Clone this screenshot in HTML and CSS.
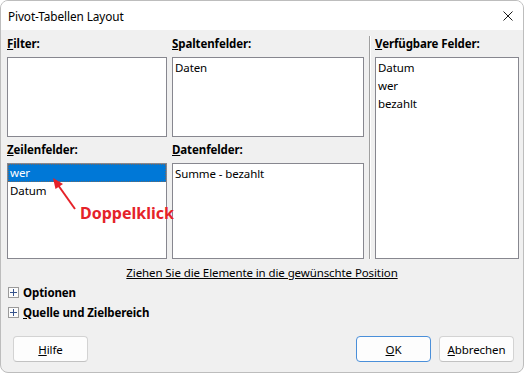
FILE: index.html
```html
<!DOCTYPE html>
<html lang="de">
<head>
<meta charset="utf-8">
<title>Pivot-Tabellen Layout</title>
<link rel="stylesheet" href="styles.css">
</head>
<body>
<div class="window">
  <div class="titlebar">
    <span class="title">Pivot-Tabellen Layout</span>
    <svg class="close" width="10" height="10" viewBox="0 0 10 10"><path d="M0.5 0.5 L9.5 9.5 M9.5 0.5 L0.5 9.5" stroke="#1a1a1a" stroke-width="1" fill="none"/></svg>
  </div>
  <div class="content">
    <div class="fields">
      <div class="field f-filter">
        <div class="label"><u>F</u>ilter:</div>
        <div class="list short"></div>
      </div>
      <div class="field f-spalten">
        <div class="label"><u>S</u>paltenfelder:</div>
        <div class="list short pad"><div class="item">Daten</div></div>
      </div>
      <div class="sep"></div>
      <div class="field f-avail">
        <div class="label"><u>V</u>erfügbare Felder:</div>
        <div class="list grow pad">
          <div class="item">Datum</div>
          <div class="item">wer</div>
          <div class="item">bezahlt</div>
        </div>
      </div>
      <div class="field f-zeilen">
        <div class="label"><u>Z</u>eilenfelder:</div>
        <div class="list tall">
          <div class="item selected">wer</div>
          <div class="item">Datum</div>
        </div>
      </div>
      <div class="field f-daten">
        <div class="label"><u>D</u>atenfelder:</div>
        <div class="list tall pad"><div class="item">Summe - bezahlt</div></div>
      </div>
    </div>
    <div class="hint"><span>Ziehen Sie die Elemente in die gewünschte Position</span></div>
    <div class="expander first"><span class="plus"></span><span class="exp-label">Optionen</span></div>
    <div class="expander"><span class="plus"></span><span class="exp-label"><u>Q</u>uelle und Zielbereich</span></div>
  </div>
  <div class="buttons">
    <button class="btn"><u>H</u>ilfe</button>
    <div class="spacer"></div>
    <button class="btn default"><u>O</u>K</button>
    <button class="btn"><u>A</u>bbrechen</button>
  </div>
  <svg class="arrow" width="40" height="40" viewBox="0 0 40 40">
    <path d="M25 34 L8 10" stroke="#e52229" stroke-width="2" fill="none"/>
    <path d="M3 3 L13 9 L5.5 14 Z" fill="#e52229"/>
  </svg>
  <span class="annotation">Doppelklick</span>
</div>
</body>
</html>
```
FILE: styles.css
```css
* { box-sizing: border-box; }
html, body { margin: 0; padding: 0; background: #ffffff; }
body {
  font-family: "Noto Sans", "Open Sans", sans-serif;
  font-size: 11.5px;
  letter-spacing: -0.1px;
  color: #000;
}
.window {
  position: relative;
  width: 524px;
  height: 373px;
  border: 1px solid #bdbdbd;
  border-radius: 8px;
  background: #f0f0f0;
  overflow: hidden;
}
.titlebar {
  height: 29px;
  background: #ffffff;
  display: flex;
  align-items: center;
  justify-content: space-between;
  padding: 0 10px 0 7px;
}
.title { font-size: 11.8px; line-height: 16px; }
.close { display: block; margin-top: 1px; }
.content { padding: 6px 4px 0 6px; }
.fields {
  display: grid;
  grid-template-columns: 160px 192px 1px 144px;
  grid-template-rows: auto auto;
  column-gap: 5px;
  row-gap: 5px;
}
.field { display: flex; flex-direction: column; }
.f-filter { grid-column: 1; grid-row: 1; }
.f-spalten { grid-column: 2; grid-row: 1; }
.sep { grid-column: 3; grid-row: 1 / span 2; background: #a0a0a0; box-shadow: 1px 0 0 #ffffff; }
.f-avail { grid-column: 4; grid-row: 1 / span 2; }
.f-zeilen { grid-column: 1; grid-row: 2; }
.f-daten { grid-column: 2; grid-row: 2; }
.label {
  font-weight: bold;
  line-height: 16px;
  height: 16px;
  margin-bottom: 5px;
  white-space: nowrap;
}
.list {
  background: #ffffff;
  border: 1px solid #87878f;
}
.list.pad { padding-top: 1px; }
.short { height: 80px; }
.tall { height: 96px; }
.grow { flex: 1; }
.item {
  height: 18px;
  line-height: 18px;
  padding-left: 2px;
  white-space: nowrap;
}
.item.selected {
  background: #0078d7;
  color: #ffffff;
  outline: 1px dotted #6a6a6a;
  outline-offset: -1px;
}
.hint {
  margin-top: 6px;
  text-align: center;
  line-height: 16px;
  padding-right: 2px;
}
.hint span { text-decoration: underline; }
.expander {
  display: flex;
  align-items: center;
  height: 16px;
  margin-top: 4px;
  padding-left: 1px;
  font-weight: bold;
}
.expander.first { margin-top: 3px; }
.plus {
  position: relative;
  width: 11px;
  height: 11px;
  border: 1px solid #9a9a9a;
  background: #fbfbfb;
  margin-right: 4px;
}
.plus::before, .plus::after {
  content: "";
  position: absolute;
  background: #34528c;
}
.plus::before { left: 1px; right: 1px; top: 4px; height: 1px; }
.plus::after { top: 1px; bottom: 1px; left: 4px; width: 1px; }
.buttons {
  display: flex;
  gap: 8px;
  padding: 0 9px 0 12px;
  margin-top: 16px;
}
.spacer { flex: 1; }
.btn {
  width: 75px;
  height: 26px;
  font-family: inherit;
  font-size: 11.5px;
  letter-spacing: -0.1px;
  color: #000;
  background: #fdfdfd;
  border: 1px solid #d3d3d3;
  border-bottom-color: #c2c2c2;
  border-radius: 4px;
  padding: 0;
}
.btn.default { border-color: #4a8fd9; }
.arrow {
  position: absolute;
  left: 49px;
  top: 174px;
}
.annotation {
  position: absolute;
  left: 79px;
  top: 202px;
  font-size: 16px;
  line-height: 20px;
  letter-spacing: 0;
  font-weight: bold;
  color: #e52229;
  white-space: nowrap;
}
```
